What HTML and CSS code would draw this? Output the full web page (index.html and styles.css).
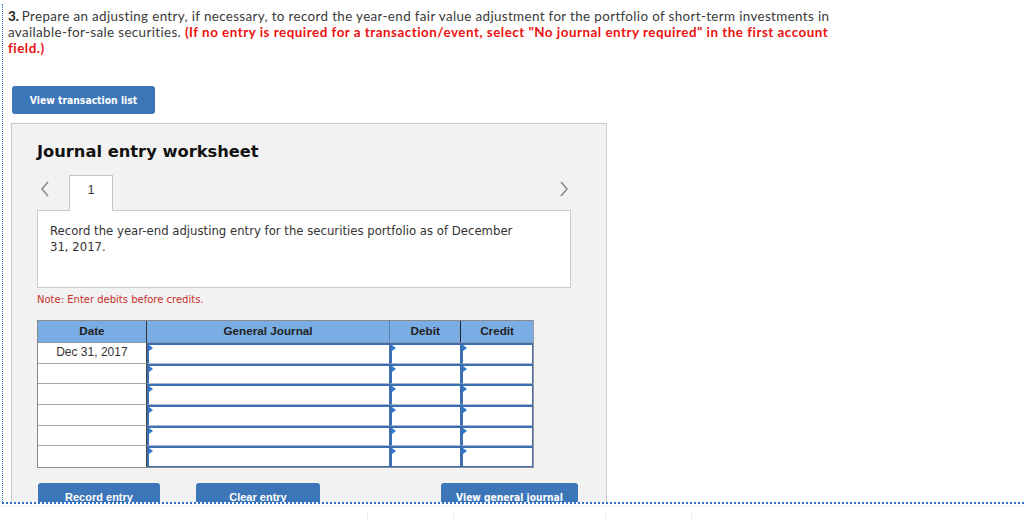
FILE: index.html
```html
<!DOCTYPE html>
<html>
<head>
<meta charset="utf-8">
<link rel="stylesheet" href="styles.css">
</head>
<body>
<div class="frame">
  <p class="question"><b class="num">3.</b> Prepare an adjusting entry, if necessary, to record the year-end fair value adjustment for the portfolio of short-term investments in<br>available-for-sale securities. <span class="hint">(If no entry is required for a transaction/event, select "No journal entry required" in the first account<br>field.)</span></p>
  <button class="btn btn-list">View transaction list</button>
  <div class="panel">
    <h2 class="title">Journal entry worksheet</h2>
    <div class="tabs">
      <span class="chev">
        <svg width="10" height="16" viewBox="0 0 10 16"><path d="M8 1 L2 8 L8 15" fill="none" stroke="#8a8a8a" stroke-width="1.6"/></svg>
      </span>
      <span class="tab">1</span>
      <span class="spacer"></span>
      <span class="chev chev-r">
        <svg width="10" height="16" viewBox="0 0 10 16"><path d="M2 1 L8 8 L2 15" fill="none" stroke="#8a8a8a" stroke-width="1.6"/></svg>
      </span>
    </div>
    <div class="desc">Record the year-end adjusting entry for the securities portfolio as of December<br>31, 2017.</div>
    <div class="note">Note: Enter debits before credits.</div>
    <div class="jtable">
      <div class="row head">
        <div class="c c-date">Date</div>
        <div class="c c-gj">General Journal</div>
        <div class="c c-dr">Debit</div>
        <div class="c c-cr">Credit</div>
      </div>
      <div class="row">
        <div class="c c-date">Dec 31, 2017</div>
        <div class="c c-gj inp"></div>
        <div class="c c-dr inp"></div>
        <div class="c c-cr inp"></div>
      </div>
      <div class="row">
        <div class="c c-date"></div>
        <div class="c c-gj inp"></div>
        <div class="c c-dr inp"></div>
        <div class="c c-cr inp"></div>
      </div>
      <div class="row">
        <div class="c c-date"></div>
        <div class="c c-gj inp"></div>
        <div class="c c-dr inp"></div>
        <div class="c c-cr inp"></div>
      </div>
      <div class="row">
        <div class="c c-date"></div>
        <div class="c c-gj inp"></div>
        <div class="c c-dr inp"></div>
        <div class="c c-cr inp"></div>
      </div>
      <div class="row">
        <div class="c c-date"></div>
        <div class="c c-gj inp"></div>
        <div class="c c-dr inp"></div>
        <div class="c c-cr inp"></div>
      </div>
      <div class="row last">
        <div class="c c-date"></div>
        <div class="c c-gj inp"></div>
        <div class="c c-dr inp"></div>
        <div class="c c-cr inp"></div>
      </div>
    </div>
    <div class="actions">
      <button class="btn btn-rec">Record entry</button>
      <button class="btn btn-clr">Clear entry</button>
      <button class="btn btn-view">View general journal</button>
    </div>
  </div>
</div>
<div class="below">
  <span class="seg s1"></span>
  <span class="seg s2"></span>
  <span class="seg s3"></span>
  <span class="seg s4"></span>
</div>
</body>
</html>
```

FILE: styles.css
```css
* { box-sizing: border-box; }
html, body { margin: 0; padding: 0; background: #fff; }
body { width: 1024px; height: 520px; overflow: hidden; }

.frame {
  margin: 4px 0 0 2px;
  height: 500px;
  border-left: 1px dotted #2f6fc4;
  border-bottom: 2px dotted #2f6fc4;
  padding: 4px 0 0 5px;
  overflow: hidden;
}

.question {
  margin: 0;
  width: 900px;
  white-space: nowrap;
  font-family: "Lato", "Liberation Sans", sans-serif;
  font-size: 13.4px;
  line-height: 16px;
  letter-spacing: 0.36px;
  color: #3a3a3a;
}
.num { color: #222; letter-spacing: 0; margin-right: -1px; }
.hint { color: #ee1111; font-weight: bold; letter-spacing: 0.5px; }

.btn {
  display: block;
  border: none;
  background: #3d76b8;
  color: #fff;
  border-radius: 3px;
  font-family: "DejaVu Sans Condensed", "DejaVu Sans", Verdana, sans-serif;
  font-weight: bold;
  font-size: 10.3px;
  padding: 0;
  cursor: pointer;
}
.btn-list {
  margin: 30px 0 0 4px;
  width: 143px;
  height: 28px;
}

.panel {
  margin: 9px 0 0 3px;
  width: 596px;
  height: 420px;
  background: #f2f2f2;
  border: 1px solid #c9c9c9;
  padding: 17px 0 0 25px;
}

.title {
  margin: 0;
  font-family: "DejaVu Sans", Verdana, sans-serif;
  font-weight: bold;
  font-size: 16.3px;
  line-height: 22px;
  color: #111;
}

.tabs {
  display: flex;
  align-items: flex-start;
  margin-top: 12px;
  width: 533px;
  height: 36px;
  position: relative;
  z-index: 1;
}
.chev { width: 32px; padding: 6px 0 0 3px; display: flex; }
.chev-r { width: 14px; padding-left: 0; margin-right: -3px; }
.tab {
  width: 44px;
  height: 36px;
  background: #fff;
  border: 1px solid #c4c4c4;
  border-bottom: none;
  text-align: center;
  font-family: "Liberation Sans", Arial, sans-serif;
  font-size: 12px;
  color: #333;
  line-height: 28px;
}
.spacer { flex: 1; }

.desc {
  margin-top: -1px;
  width: 534px;
  height: 78px;
  background: #fff;
  border: 1px solid #c9c9c9;
  padding: 12px 12px 0 12px;
  font-family: "DejaVu Sans", Verdana, sans-serif;
  font-size: 11.7px;
  line-height: 16px;
  color: #333;
}

.note {
  margin-top: 5px;
  font-family: "DejaVu Sans", Verdana, sans-serif;
  font-size: 10px;
  line-height: 14px;
  color: #c8302a;
}

.jtable {
  margin-top: 13px;
  width: 497px;
  border: 1px solid #8a8a8a;
  border-right: 1px solid #9a9a9a;
  background: #fff;
  font-family: "Liberation Sans", Arial, sans-serif;
  font-size: 12px;
}
.row { display: flex; height: 20.7px; }
.row.head { height: 22px; background: #79ade4; }
.c { height: 100%; }
.c-date { width: 109px; border-right: 1px solid #444; text-align: center; line-height: 19px; color: #333; border-bottom: 1px solid #a8a8a8; }
.c-gj { width: 244px; }
.c-dr { width: 71px; }
.c-cr { width: 72px; }
.row.last .c-date { border-bottom: none; }

.head .c {
  font-weight: bold;
  font-size: 11.7px;
  color: #222;
  text-align: center;
  line-height: 20px;
  border-bottom: 1px solid #8a9bb0;
}
.head .c-date { border-right: 1px solid #333; }
.head .c-gj { border-right: 1px solid #5d7fa8; }
.head .c-dr { border-right: 1px solid #222; }

.inp {
  position: relative;
  background: #fff;
  border-top: 2px solid #3c6fb1;
  border-left: 2px solid #3c6fb1;
  border-right: 1px solid #3c6fb1;
  border-bottom: 1px solid #a9b9cf;
}
.inp::before {
  content: "";
  position: absolute;
  left: 0;
  top: 0;
  border-top: 3px solid transparent;
  border-bottom: 3px solid transparent;
  border-left: 4px solid #2f78d0;
}
.row.last .inp { border-bottom: 1px solid #3c6fb1; }

.actions {
  display: flex;
  margin-top: 15px;
}
.btn-rec, .btn-clr {
  font-family: "Liberation Sans", Arial, sans-serif;
  font-size: 11px;
}
.btn-rec { margin-left: 1px; width: 122px; height: 28px; }
.btn-clr { margin-left: 36px; width: 124px; height: 28px; }
.btn-view { margin-left: 121px; width: 137px; height: 28px; font-size: 10.2px; }

.below {
  display: flex;
  height: 14px;
  border-top: 1px solid #f3f3f3;
  margin-top: 2px;
}
.seg { display: block; height: 100%; margin-top: 6px; }
.s1 { width: 368px; border-right: 1px solid #ececec; }
.s2 { width: 86px; border-right: 1px solid #ececec; }
.s3 { width: 152px; border-right: 1px solid #ececec; }
.s4 { width: 86px; border-right: 1px solid #ececec; }
```
